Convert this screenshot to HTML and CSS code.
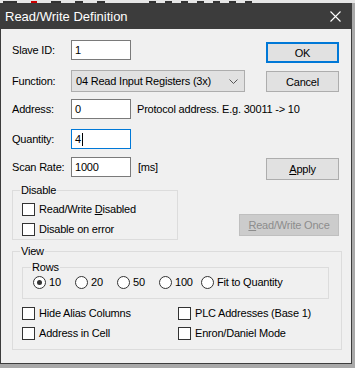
FILE: index.html
```html
<!DOCTYPE html>
<html lang="en">
<head>
<meta charset="UTF-8">
<title>Read/Write Definition</title>
<link rel="stylesheet" href="styles.css">
</head>
<body>

<div class="strip">
<span class="mark w14"></span>
<span class="mark red"></span>
<span class="mark w10"></span>
<span class="mark w8"></span>
<span class="mark w8"></span>
<span class="gap"></span>
<span class="mark w6"></span><span class="mark w6"></span>
<span class="mark w6"></span><span class="mark w6"></span>
<span class="mark w6"></span><span class="mark w6"></span>
<span class="mark w6"></span>
</div>

<div class="dialog">

<div class="titlebar">
<span class="title">Read/Write Definition</span>
<svg class="close" width="11" height="11" viewBox="0 0 11 11"><path d="M0.5 0.5L10.5 10.5M10.5 0.5L0.5 10.5" stroke="#fff" stroke-width="1.1" fill="none"/></svg>
</div>

<div class="content">

<div class="row r1">
<span class="lbl">Slave ID:</span>
<div class="edit">1</div>
<div class="grow"></div>
<button class="btn default">OK</button>
</div>

<div class="row r2">
<span class="lbl tall">Function:</span>
<div class="combo">
<span>04 Read Input Registers (3x)</span>
<svg width="9" height="5" viewBox="0 0 9 5"><path d="M0.5 0.5L4.5 4.5L8.5 0.5" stroke="#555" fill="none"/></svg>
</div>
<div class="grow"></div>
<button class="btn cancel">Cancel</button>
</div>

<div class="row r3">
<span class="lbl">Address:</span>
<div class="edit">0</div>
<span class="hint">Protocol address. E.g. 30011 -&gt; 10</span>
</div>

<div class="row r4">
<span class="lbl">Quantity:</span>
<div class="edit focus">4<span class="caret"></span></div>
</div>

<div class="row r5">
<span class="lbl">Scan Rate:</span>
<div class="edit">1000</div>
<span class="unit">[ms]</span>
<div class="grow"></div>
<button class="btn apply"><u>A</u>pply</button>
</div>

<div class="row r6">
<fieldset class="grp disable">
<legend>Disable</legend>
<label class="chk"><span class="box"></span><span>Read/Write <u>D</u>isabled</span></label>
<label class="chk"><span class="box"></span><span>Disable on error</span></label>
</fieldset>
<div class="grow"></div>
<button class="btn once" disabled><u>R</u>ead/Write Once</button>
</div>

<fieldset class="grp view">
<legend>View</legend>

<fieldset class="grp rows">
<legend>Rows</legend>
<div class="radios">
<label class="rad"><span class="dot on"></span><span>10</span></label>
<label class="rad"><span class="dot"></span><span>20</span></label>
<label class="rad"><span class="dot"></span><span>50</span></label>
<label class="rad"><span class="dot"></span><span>100</span></label>
<label class="rad last"><span class="dot"></span><span>Fit to Quantity</span></label>
</div>
</fieldset>

<div class="opts">
<label class="chk"><span class="box"></span><span>Hide Alias Columns</span></label>
<label class="chk"><span class="box"></span><span>PLC Addresses (Base 1)</span></label>
<label class="chk"><span class="box"></span><span>Address in Cell</span></label>
<label class="chk"><span class="box"></span><span>Enron/Daniel Mode</span></label>
</div>
</fieldset>

</div>
</div>

</body>
</html>
```

FILE: styles.css
```css
body{
margin:0;
background:#a9a9a9;
font-family:"Liberation Sans",Arial,sans-serif;
font-size:11px;
color:#000;
}

.strip{
height:3px;
background:#e6e6e6;
display:flex;
align-items:flex-end;
overflow:hidden;
padding-left:3px;
}

.mark{
height:2px;
background:#333;
margin-right:14px;
}

.w14{width:14px;}
.w10{width:10px;}
.w8{width:8px;}
.w6{width:7px;margin-right:9px;}
.red{width:6px;background:#c00;}
.gap{width:30px;}

.dialog{
width:352px;
box-sizing:border-box;
border:1px solid #3c3c3c;
border-top:0;
background:#f0f0f0;
}

.titlebar{
height:26px;
background:#3c3c3c;
color:#fff;
font-size:13px;
display:flex;
align-items:center;
justify-content:space-between;
padding:0 10px 0 4px;
}

.content{
padding:11px 12px 13px 11px;
letter-spacing:-0.2px;
}

.row{
display:flex;
align-items:flex-start;
}

.r1{height:30px;}
.r2{height:29px;}
.r3{height:30px;}
.r4{height:28px;}
.r5{height:27px;}

.lbl{
width:59px;
line-height:20px;
}

.lbl.tall{
line-height:22px;
}

.edit{
width:60px;
height:20px;
box-sizing:border-box;
border:1px solid #7a7a7a;
background:#fff;
padding:0 3px;
line-height:18px;
display:flex;
align-items:center;
}

.edit.focus{
border-color:#0078d7;
}

.caret{
width:1px;
height:13px;
background:#000;
margin-left:1px;
}

.combo{
width:174px;
height:22px;
box-sizing:border-box;
border:1px solid #adadad;
background:#e1e1e1;
padding:0 6px 0 4px;
display:flex;
align-items:center;
justify-content:space-between;
}

.hint{
margin-left:6px;
line-height:20px;
}

.unit{
margin-left:7px;
line-height:20px;
}

.grow{
flex:1;
}

.btn{
width:73px;
height:21px;
box-sizing:border-box;
border:1px solid #adadad;
background:#e1e1e1;
font:inherit;
letter-spacing:inherit;
color:#000;
padding:0;
}

.btn.default{
border:2px solid #0078d7;
margin-top:2px;
}

.btn.cancel{
margin-top:1px;
}

.btn.apply{
margin-top:1px;
height:22px;
}

.btn.once{
width:100px;
height:22px;
margin-top:30px;
background:#cccccc;
border-color:#bfbfbf;
color:#8d8d8d;
}

.grp{
margin:0;
border:1px solid #dcdcdc;
min-width:0;
box-sizing:border-box;
}

.grp legend{
padding:0 1px;
margin-left:-2px;
line-height:13px;
}

.disable{
width:166px;
padding:2px 9px 0;
}

.view{
width:330px;
margin-top:5px;
padding:3px 12px 6px 9px;
}

.rows{
padding:0 0 8px 10px;
}

.radios{
display:flex;
height:16px;
align-items:center;
}

.rad{
width:42px;
display:flex;
align-items:center;
}

.rad.last{
width:auto;
}

.dot{
width:13px;
height:13px;
box-sizing:border-box;
border:1px solid #333;
border-radius:50%;
background:#fff;
margin-right:3px;
display:flex;
align-items:center;
justify-content:center;
}

.dot.on::after{
content:"";
width:5px;
height:5px;
border-radius:50%;
background:#333;
}

.chk{
height:20px;
display:flex;
align-items:center;
}

.box{
width:13px;
height:13px;
box-sizing:border-box;
border:1px solid #333;
background:#fff;
margin-right:4px;
}

.opts{
display:grid;
grid-template-columns:156px auto;
margin-top:4px;
}
```
